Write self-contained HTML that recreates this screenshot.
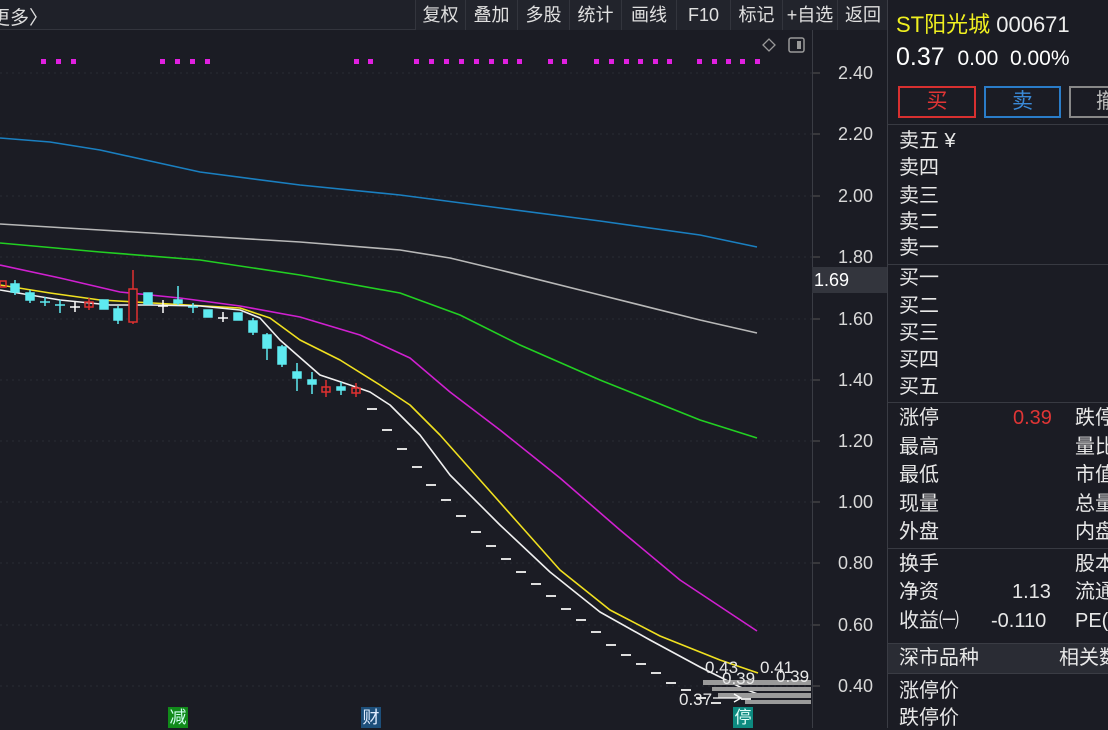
<!DOCTYPE html>
<html><head><meta charset="utf-8"><style>
*{margin:0;padding:0;box-sizing:border-box}
body{width:1108px;height:728px;background:#1b1c24;overflow:hidden;position:relative;font-family:"Liberation Sans","Noto Sans CJK SC",sans-serif;color:#e6e6e6}
.a{position:absolute;white-space:nowrap}
.tb{position:absolute;top:0;height:30px;font-size:18px;line-height:30px;color:#e0e0e0;text-align:center;border-left:1px solid #33353d;background:#22242c;white-space:nowrap}
.ax{position:absolute;left:838px;font-size:18px;color:#d8d8d8;line-height:20px}
.r{position:absolute;left:899px;font-size:20px;line-height:24px;color:#e8e8e8;white-space:nowrap}
.hl{position:absolute;left:888px;width:220px;height:1px;background:#383a42}
</style></head><body>
<div class="a" style="left:0;top:0;width:415px;height:30px;background:#1f2129;border-bottom:1px solid #33353d"></div>
<div class="a" style="left:-9px;top:3px;font-size:19px;color:#ddd">更多〉</div>
<div class="tb" style="left:415px;width:50px">复权</div>
<div class="tb" style="left:465px;width:52px">叠加</div>
<div class="tb" style="left:517px;width:52px">多股</div>
<div class="tb" style="left:569px;width:52px">统计</div>
<div class="tb" style="left:621px;width:55px">画线</div>
<div class="tb" style="left:676px;width:54px">F10</div>
<div class="tb" style="left:730px;width:52px">标记</div>
<div class="tb" style="left:782px;width:55px">+自选</div>
<div class="tb" style="left:837px;width:51px">返回</div>
<div class="a" style="left:812px;top:30px;width:1px;height:698px;background:#3a3c44"></div>
<div class="a" style="left:887px;top:0;width:1px;height:728px;background:#3a3c44"></div>
<svg class="a" style="left:0;top:0" width="888" height="728">
<g stroke="#2a2c34" stroke-dasharray="2 4">
<line x1="0" y1="73" x2="812" y2="73"/><line x1="0" y1="134" x2="812" y2="134"/><line x1="0" y1="196" x2="812" y2="196"/><line x1="0" y1="257" x2="812" y2="257"/><line x1="0" y1="319" x2="812" y2="319"/><line x1="0" y1="380" x2="812" y2="380"/><line x1="0" y1="441" x2="812" y2="441"/><line x1="0" y1="502" x2="812" y2="502"/><line x1="0" y1="563" x2="812" y2="563"/><line x1="0" y1="625" x2="812" y2="625"/><line x1="0" y1="686" x2="812" y2="686"/>
</g>
<g stroke="#555" ><line x1="813" y1="73" x2="820" y2="73"/><line x1="813" y1="134" x2="820" y2="134"/><line x1="813" y1="196" x2="820" y2="196"/><line x1="813" y1="257" x2="820" y2="257"/><line x1="813" y1="319" x2="820" y2="319"/><line x1="813" y1="380" x2="820" y2="380"/><line x1="813" y1="441" x2="820" y2="441"/><line x1="813" y1="502" x2="820" y2="502"/><line x1="813" y1="563" x2="820" y2="563"/><line x1="813" y1="625" x2="820" y2="625"/><line x1="813" y1="686" x2="820" y2="686"/></g>
<g fill="#e020e0">
<rect x="41" y="59" width="5" height="5"/><rect x="56" y="59" width="5" height="5"/><rect x="71" y="59" width="5" height="5"/>
<rect x="160" y="59" width="5" height="5"/><rect x="175" y="59" width="5" height="5"/><rect x="190" y="59" width="5" height="5"/><rect x="205" y="59" width="5" height="5"/>
<rect x="354" y="59" width="5" height="5"/><rect x="368" y="59" width="5" height="5"/>
<rect x="414" y="59" width="5" height="5"/><rect x="429" y="59" width="5" height="5"/><rect x="444" y="59" width="5" height="5"/><rect x="459" y="59" width="5" height="5"/><rect x="474" y="59" width="5" height="5"/><rect x="489" y="59" width="5" height="5"/><rect x="503" y="59" width="5" height="5"/><rect x="517" y="59" width="5" height="5"/>
<rect x="548" y="59" width="5" height="5"/><rect x="562" y="59" width="5" height="5"/>
<rect x="594" y="59" width="5" height="5"/><rect x="609" y="59" width="5" height="5"/><rect x="624" y="59" width="5" height="5"/><rect x="638" y="59" width="5" height="5"/><rect x="653" y="59" width="5" height="5"/><rect x="667" y="59" width="5" height="5"/>
<rect x="697" y="59" width="5" height="5"/><rect x="712" y="59" width="5" height="5"/><rect x="726" y="59" width="5" height="5"/><rect x="740" y="59" width="5" height="5"/><rect x="755" y="59" width="5" height="5"/>
</g>
<path d="M763 45l6-6 6 6-6 6z" fill="none" stroke="#999" stroke-width="1.3"/>
<rect x="789" y="38" width="15" height="14" rx="2" fill="none" stroke="#999" stroke-width="1.5"/><rect x="797" y="41" width="4" height="8" fill="#999"/>
<g fill="none" stroke-width="1.6" stroke-linejoin="round">
<polyline stroke="#1a7fc0" points="0,138 50,142 100,150 150,161 200,172 300,185 400,195 500,208 600,221 700,235 757,247"/>
<polyline stroke="#b8b8b8" points="0,224 100,230 200,236 300,242 400,250 450,258 500,270 600,295 700,320 757,333"/>
<polyline stroke="#22d022" points="0,243 100,252 200,260 300,275 400,293 460,315 520,345 600,380 700,420 757,438"/>
<polyline stroke="#d020d0" points="0,265 60,278 120,292 180,298 240,306 300,317 360,335 410,358 450,392 500,430 560,478 620,530 680,580 757,631"/>
<polyline stroke="#f0e020" points="0,285 50,293 100,300 170,304 240,308 270,318 300,340 340,360 380,385 410,405 440,435 480,480 520,525 560,570 610,610 660,636 720,660 758,673"/>
<polyline stroke="#f0f0f0" points="0,290 60,300 110,305 150,305 200,306 240,310 260,318 280,340 320,375 350,385 370,392 390,405 420,435 450,475 500,525 550,572 600,612 650,640 700,667 740,687 760,695"/>
</g>
<g fill="#5eeaf0" stroke="#5eeaf0" stroke-width="1.5">
<line x1="15" y1="280" x2="15" y2="295"/><rect x="11" y="284" width="8" height="8"/>
<line x1="30" y1="290" x2="30" y2="303"/><rect x="26" y="293" width="8" height="7"/>
<line x1="45" y1="297" x2="45" y2="306"/><line x1="40" y1="302" x2="50" y2="302"/>
<line x1="60" y1="300" x2="60" y2="313"/><line x1="55" y1="305" x2="65" y2="305"/>
<rect x="100" y="300" width="8" height="9"/>
<line x1="118" y1="306" x2="118" y2="324"/><rect x="114" y="309" width="8" height="11"/>
<rect x="144" y="293" width="8" height="11"/>
<line x1="178" y1="286" x2="178" y2="305"/><rect x="174" y="300" width="8" height="3"/>
<line x1="193" y1="303" x2="193" y2="313"/><line x1="188" y1="307" x2="198" y2="307"/>
<rect x="204" y="310" width="8" height="7"/>
<rect x="234" y="313" width="8" height="7"/>
<line x1="253" y1="318" x2="253" y2="335"/><rect x="249" y="321" width="8" height="11"/>
<line x1="267" y1="333" x2="267" y2="360"/><rect x="263" y="335" width="8" height="13"/>
<line x1="282" y1="345" x2="282" y2="367"/><rect x="278" y="347" width="8" height="17"/>
<line x1="297" y1="363" x2="297" y2="391"/><rect x="293" y="372" width="8" height="6"/>
<line x1="312" y1="372" x2="312" y2="394"/><rect x="308" y="380" width="8" height="4"/>
<line x1="341" y1="382" x2="341" y2="395"/><rect x="337" y="387" width="8" height="3"/>
</g>
<g stroke="#fff" stroke-width="1.5"><line x1="75" y1="302" x2="75" y2="312"/><line x1="70" y1="307" x2="80" y2="307"/>
<line x1="163" y1="300" x2="163" y2="313"/><line x1="158" y1="306" x2="168" y2="306"/>
<line x1="223" y1="312" x2="223" y2="322"/><line x1="218" y1="318" x2="228" y2="318"/></g>
<g fill="none" stroke="#e03030" stroke-width="1.5">
<line x1="133" y1="270" x2="133" y2="324"/><rect x="129" y="289" width="8" height="33" fill="#1b1c24"/>
<line x1="89" y1="298" x2="89" y2="310"/><rect x="85" y="302" width="8" height="5"/>
<line x1="326" y1="380" x2="326" y2="397"/><rect x="322" y="387" width="8" height="5"/>
<line x1="356" y1="383" x2="356" y2="397"/><rect x="352" y="388" width="8" height="5"/>
<rect x="0" y="281" width="6" height="6"/>
</g>
<g stroke="#ddd" stroke-width="2">
<line x1="367" y1="409" x2="377" y2="409"/><line x1="382" y1="430" x2="392" y2="430"/><line x1="397" y1="449" x2="407" y2="449"/><line x1="412" y1="467" x2="422" y2="467"/><line x1="426" y1="485" x2="436" y2="485"/><line x1="441" y1="500" x2="451" y2="500"/><line x1="456" y1="516" x2="466" y2="516"/><line x1="471" y1="532" x2="481" y2="532"/><line x1="486" y1="546" x2="496" y2="546"/><line x1="501" y1="559" x2="511" y2="559"/><line x1="516" y1="572" x2="526" y2="572"/><line x1="531" y1="584" x2="541" y2="584"/><line x1="546" y1="596" x2="556" y2="596"/><line x1="561" y1="609" x2="571" y2="609"/><line x1="576" y1="620" x2="586" y2="620"/><line x1="591" y1="632" x2="601" y2="632"/><line x1="606" y1="645" x2="616" y2="645"/><line x1="621" y1="655" x2="631" y2="655"/><line x1="636" y1="664" x2="646" y2="664"/><line x1="651" y1="673" x2="661" y2="673"/><line x1="666" y1="683" x2="676" y2="683"/><line x1="681" y1="690" x2="691" y2="690"/><line x1="696" y1="698" x2="706" y2="698"/><line x1="711" y1="703" x2="721" y2="703"/><line x1="741" y1="699" x2="751" y2="699"/>
</g>
<g fill="#9a9a9a"><rect x="703" y="680" width="108" height="5"/><rect x="712" y="687" width="99" height="4"/><rect x="718" y="693" width="93" height="5"/><rect x="745" y="700" width="66" height="4"/></g>
<text x="705" y="673" font-size="17" fill="#e8e8e8" font-family="Liberation Sans">0.43</text>
<text x="760" y="673" font-size="17" fill="#e8e8e8" font-family="Liberation Sans">0.41</text>
<text x="722" y="684" font-size="17" fill="#e8e8e8" font-family="Liberation Sans">0.39</text>
<text x="776" y="682" font-size="17" fill="#e8e8e8" font-family="Liberation Sans">0.39</text>
<text x="679" y="705" font-size="17" fill="#e8e8e8" font-family="Liberation Sans">0.37</text>
<path d="M713 698h28M734 694l7 4-7 4" stroke="#fff" fill="none" stroke-width="1.3"/>
</svg>
<div class="a" style="left:168px;top:707px;width:20px;height:21px;background:#118a1a;color:#cfe;font-size:17px;text-align:center;line-height:21px">减</div>
<div class="a" style="left:361px;top:707px;width:20px;height:21px;background:#1d4f7a;color:#e0ecff;font-size:17px;text-align:center;line-height:21px">财</div>
<div class="a" style="left:733px;top:707px;width:20px;height:21px;background:#0d8a80;color:#e0fff8;font-size:17px;text-align:center;line-height:21px">停</div>
<div class="ax" style="top:63px">2.40</div><div class="ax" style="top:124px">2.20</div><div class="ax" style="top:186px">2.00</div><div class="ax" style="top:247px">1.80</div><div class="ax" style="top:309px">1.60</div><div class="ax" style="top:370px">1.40</div><div class="ax" style="top:431px">1.20</div><div class="ax" style="top:492px">1.00</div><div class="ax" style="top:553px">0.80</div><div class="ax" style="top:615px">0.60</div><div class="ax" style="top:676px">0.40</div>
<div class="a" style="left:812px;top:267px;width:75px;height:26px;background:#33353d;color:#fff;font-size:18px;line-height:26px;padding-left:2px">1.69</div>

<div class="a" style="left:896px;top:7px;font-size:22px;color:#f0f020">ST阳光城 <span style="color:#eee">000671</span></div>
<div class="a" style="left:896px;top:43px;font-size:25px;color:#fff">0.37 <span style="font-size:21px">&nbsp;0.00 &nbsp;0.00%</span></div>
<div class="a" style="left:898px;top:86px;width:78px;height:32px;border:2px solid #d83030;color:#e03535;font-size:21px;text-align:center;line-height:28px">买</div>
<div class="a" style="left:984px;top:86px;width:77px;height:32px;border:2px solid #2a7cc8;color:#3a8ad8;font-size:21px;text-align:center;line-height:28px">卖</div>
<div class="a" style="left:1069px;top:86px;width:50px;height:32px;border:2px solid #888;color:#bbb;font-size:21px;line-height:28px;padding-left:25px">撤</div>
<div class="hl" style="top:124px"></div>
<div class="r" style="top:129px">卖五 ¥</div><div class="r" style="top:156px">卖四</div><div class="r" style="top:184px">卖三</div><div class="r" style="top:210px">卖二</div><div class="r" style="top:236px">卖一</div>
<div class="hl" style="top:264px"></div>
<div class="r" style="top:266px">买一</div><div class="r" style="top:294px">买二</div><div class="r" style="top:321px">买三</div><div class="r" style="top:348px">买四</div><div class="r" style="top:375px">买五</div>
<div class="hl" style="top:402px"></div>
<div class="r" style="top:406px">涨停</div><div class="r" style="top:435px">最高</div><div class="r" style="top:463px">最低</div><div class="r" style="top:492px">现量</div><div class="r" style="top:520px">外盘</div>
<div class="a" style="left:1013px;top:406px;font-size:20px;line-height:24px;color:#e03535">0.39</div>
<div class="r" style="left:1075px;top:406px">跌停</div><div class="r" style="left:1075px;top:435px">量比</div><div class="r" style="left:1075px;top:463px">市值</div><div class="r" style="left:1075px;top:492px">总量</div><div class="r" style="left:1075px;top:520px">内盘</div>
<div class="hl" style="top:548px"></div>
<div class="r" style="top:552px">换手</div><div class="r" style="top:580px">净资</div><div class="r" style="top:609px">收益㈠</div>
<div class="a" style="left:1012px;top:580px;font-size:20px;line-height:24px">1.13</div>
<div class="a" style="left:991px;top:609px;font-size:20px;line-height:24px">-0.110</div>
<div class="r" style="left:1075px;top:552px">股本</div><div class="r" style="left:1075px;top:580px">流通</div><div class="r" style="left:1075px;top:609px">PE(动</div>
<div class="a" style="left:888px;top:643px;width:220px;height:31px;background:#2a2c34;border-top:1px solid #3a3c44;border-bottom:1px solid #3a3c44"></div>
<div class="r" style="top:646px">深市品种</div><div class="r" style="left:1059px;top:646px">相关数</div>
<div class="r" style="top:679px">涨停价</div><div class="r" style="top:706px">跌停价</div>
</body></html>
